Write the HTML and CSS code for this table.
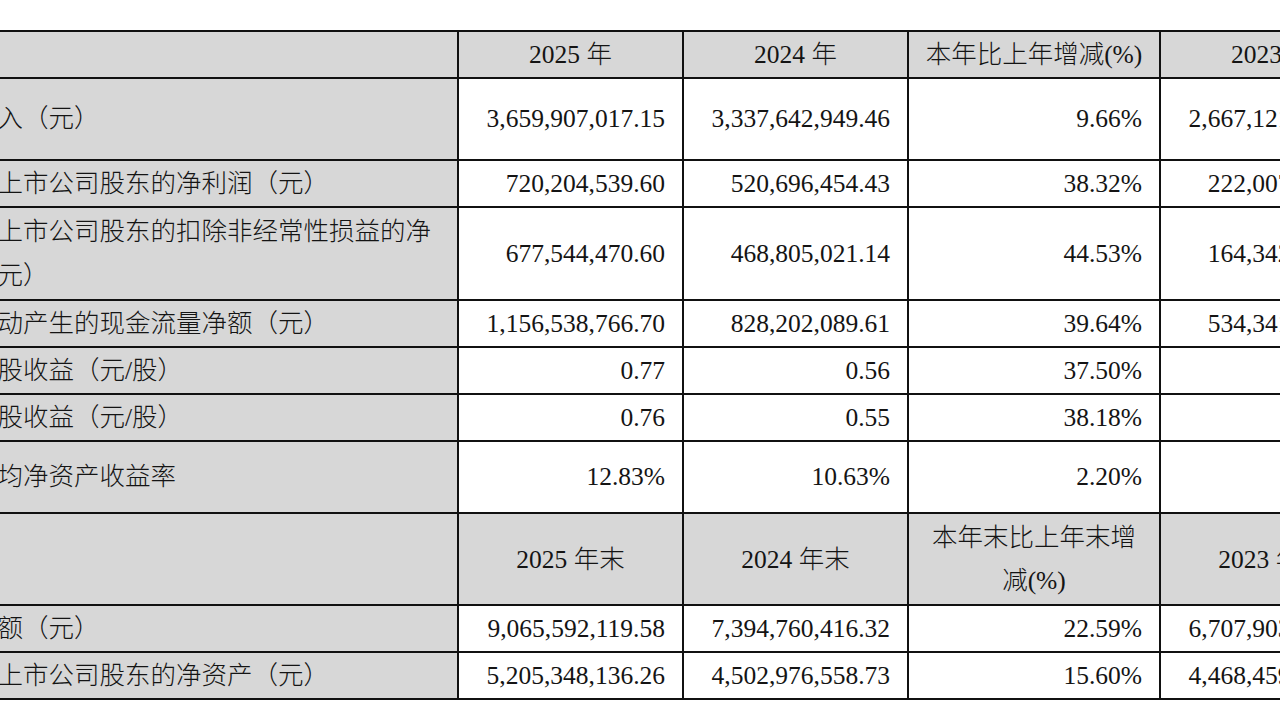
FILE: index.html
```html
<!DOCTYPE html>
<html lang="zh-CN">
<head>
<meta charset="utf-8">
<title>主要会计数据</title>
<link rel="stylesheet" href="styles.css">
</head>
<body>
<div class="page">
<table class="fin">
  <colgroup>
    <col class="c-label">
    <col class="c-num">
    <col class="c-num">
    <col class="c-pct">
    <col class="c-num">
  </colgroup>
  <tr class="r-head">
    <th class="label"></th>
    <th>2025 年</th>
    <th>2024 年</th>
    <th>本年比上年增减(%)</th>
    <th>2023 年</th>
  </tr>
  <tr class="r-tall">
    <td class="label">营业收入（元）</td>
    <td>3,659,907,017.15</td>
    <td>3,337,642,949.46</td>
    <td>9.66%</td>
    <td>2,667,121,554.41</td>
  </tr>
  <tr class="r-std">
    <td class="label">归属于上市公司股东的净利润（元）</td>
    <td>720,204,539.60</td>
    <td>520,696,454.43</td>
    <td>38.32%</td>
    <td>222,007,183.04</td>
  </tr>
  <tr class="r-two">
    <td class="label">归属于上市公司股东的扣除非经常性损益的净利润（元）</td>
    <td>677,544,470.60</td>
    <td>468,805,021.14</td>
    <td>44.53%</td>
    <td>164,342,316.15</td>
  </tr>
  <tr class="r-std">
    <td class="label">经营活动产生的现金流量净额（元）</td>
    <td>1,156,538,766.70</td>
    <td>828,202,089.61</td>
    <td>39.64%</td>
    <td>534,341,907.33</td>
  </tr>
  <tr class="r-std">
    <td class="label">基本每股收益（元/股）</td>
    <td>0.77</td>
    <td>0.56</td>
    <td>37.50%</td>
    <td>0.24</td>
  </tr>
  <tr class="r-std">
    <td class="label">稀释每股收益（元/股）</td>
    <td>0.76</td>
    <td>0.55</td>
    <td>38.18%</td>
    <td>0.24</td>
  </tr>
  <tr class="r-mid">
    <td class="label">加权平均净资产收益率</td>
    <td>12.83%</td>
    <td>10.63%</td>
    <td>2.20%</td>
    <td>5.09%</td>
  </tr>
  <tr class="r-head2">
    <th class="label"></th>
    <th>2025 年末</th>
    <th>2024 年末</th>
    <th>本年末比上年末增<br>减(%)</th>
    <th>2023 年末</th>
  </tr>
  <tr class="r-std">
    <td class="label">资产总额（元）</td>
    <td>9,065,592,119.58</td>
    <td>7,394,760,416.32</td>
    <td>22.59%</td>
    <td>6,707,903,412.26</td>
  </tr>
  <tr class="r-std">
    <td class="label">归属于上市公司股东的净资产（元）</td>
    <td>5,205,348,136.26</td>
    <td>4,502,976,558.73</td>
    <td>15.60%</td>
    <td>4,468,459,230.17</td>
  </tr>
</table>
</div>
</body>
</html>
```

FILE: styles.css
```css
html, body {
  margin: 0;
  padding: 0;
  background: #ffffff;
  overflow: hidden;
}

.page {
  padding-top: 30px;
  width: 1280px;
  height: 719px;
  overflow: hidden;
}

.fin {
  border-collapse: collapse;
  table-layout: fixed;
  width: 1472px;
  margin-left: -88px;
  font-family: "Liberation Serif", "Noto Sans CJK SC", serif;
  font-size: 25.5px;
  font-weight: 300;
  color: #141414;
  line-height: 44px;
}

.c-label { width: 545px; }
.c-num { width: 225px; }
.c-pct { width: 252px; }

.fin th,
.fin td {
  border: 2px solid #111111;
  padding: 0 17px 0 17px;
  vertical-align: middle;
  white-space: normal;
}

.fin th {
  background: #d7d7d7;
  font-weight: 300;
  text-align: center;
  padding: 0 4px;
  white-space: nowrap;
}

.fin td {
  text-align: right;
  background: #ffffff;
}

.fin .label {
  background: #d7d7d7;
  text-align: left;
  padding-left: 7px;
  padding-right: 6px;
  white-space: normal;
}

.r-head { height: 47px; }
.r-tall { height: 82px; }
.r-std { height: 47px; }
.r-two { height: 93px; }
.r-mid { height: 72px; }
.r-head2 { height: 92px; }

.r-head th {
  line-height: 40px;
}

.r-head2 th {
  line-height: 43px;
}
```
